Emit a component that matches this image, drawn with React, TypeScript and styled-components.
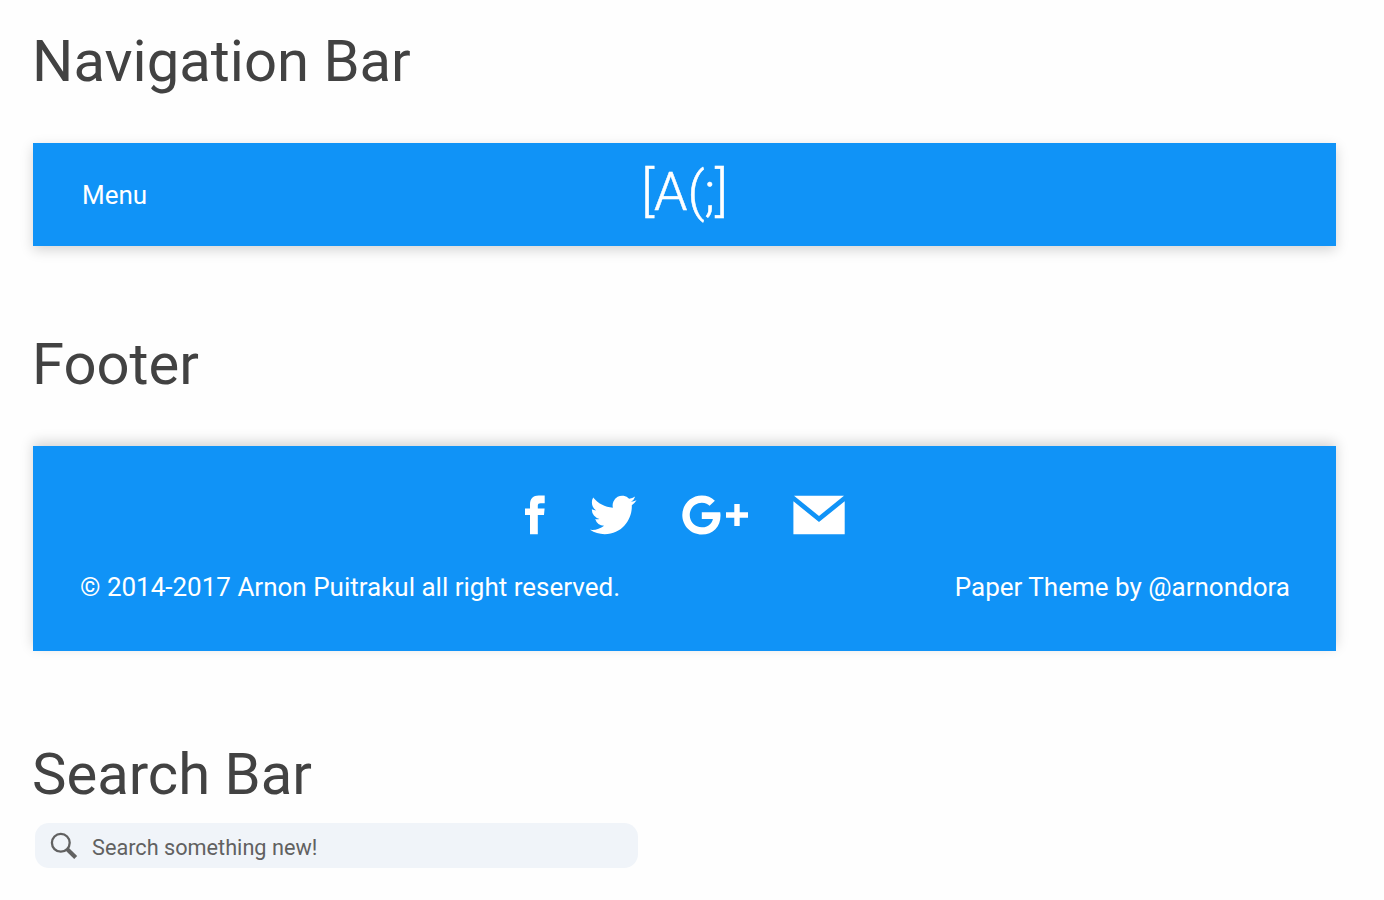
import React from 'react';
import styled, { createGlobalStyle } from 'styled-components';

const GlobalStyle = createGlobalStyle`
  * { box-sizing: border-box; }
  body {
    margin: 0;
    background: #fefefe;
    font-family: Roboto, "Liberation Sans", sans-serif;
  }
`;

const Page = styled.main`
  width: 1384px;
  height: 900px;
  padding: 27px 48px 0 33px;
  overflow: hidden;
`;

const Section = styled.section<{ $height: number }>`
  height: ${(p) => p.$height}px;
`;

const Heading = styled.h1<{ $gap: number }>`
  margin: 0 0 ${(p) => p.$gap}px -1px;
  color: #424242;
  font-size: 58px;
  font-weight: 400;
  line-height: 68px;
`;

const NavBar = styled.nav`
  display: grid;
  grid-template-columns: 1fr auto 1fr;
  align-items: center;
  height: 102.5px;
  padding: 0 49px;
  background: #1093f7;
  color: #fff;
  box-shadow: 0 4px 12px rgba(0, 0, 0, 0.17);
`;

const NavLink = styled.span`
  font-size: 26px;
  line-height: 30px;
`;

const Logo = styled.span`
  padding-bottom: 6px;
  font-size: 53.5px;
  font-weight: 300;
  line-height: 60px;
  -webkit-text-stroke: 0.5px #fff;
`;

const FooterBar = styled.footer`
  height: 205px;
  padding: 49px 46px 0 47px;
  background: #1093f7;
  color: #fff;
  box-shadow: 0 -4px 12px rgba(0, 0, 0, 0.17);
`;

const SocialRow = styled.div`
  display: flex;
  justify-content: center;
  align-items: flex-start;
  gap: 45px;
  height: 40px;
`;

const Icon = styled.svg`
  display: block;
  flex: none;
  fill: currentColor;
`;

const FooterText = styled.div`
  display: flex;
  justify-content: space-between;
  margin-top: 37px;
  font-size: 26px;
  line-height: 30px;
`;

const SearchBar = styled.label`
  display: flex;
  align-items: center;
  width: 603px;
  height: 45px;
  margin-left: 2px;
  padding-left: 15px;
  gap: 14px;
  border-radius: 14px;
  background: #f0f4f9;
  color: #616161;
`;

const SearchInput = styled.input`
  flex: 1;
  padding: 5px 0 0;
  border: 0;
  outline: 0;
  background: transparent;
  color: inherit;
  font: 400 21.7px/26px Roboto, "Liberation Sans", sans-serif;
  &::placeholder { color: #616161; opacity: 1; }
`;

const FacebookIcon = () => (
  <Icon width="20" height="40" viewBox="0 0 20 40">
    <path d="M5 39.3V20H0v-6.5h5V9.6C5 3.5 8.2.5 13.7.5h6v7.7h-4.1c-2 0-2.8.8-2.8 2.5v2.8h6.8L19 20h-6.2v19.3z" />
  </Icon>
);

const TwitterIcon = () => (
  <Icon width="47" height="40" viewBox="0 0 47 40">
    <path
      transform="translate(0 -3.7) scale(1.94 1.97)"
      d="M23.953 4.57a10 10 0 01-2.825.775 4.958 4.958 0 002.163-2.723c-.951.555-2.005.959-3.127 1.184a4.92 4.92 0 00-8.384 4.482C7.69 8.095 4.067 6.13 1.64 3.162a4.822 4.822 0 00-.666 2.475c0 1.71.87 3.213 2.188 4.096a4.904 4.904 0 01-2.228-.616v.06a4.923 4.923 0 003.946 4.827 4.996 4.996 0 01-2.212.085 4.936 4.936 0 004.604 3.417 9.867 9.867 0 01-6.102 2.105c-.39 0-.779-.023-1.17-.067a13.995 13.995 0 007.557 2.209c9.053 0 13.998-7.496 13.998-13.985 0-.21 0-.42-.015-.63A9.935 9.935 0 0024 4.59z"
    />
  </Icon>
);

const GooglePlusIcon = () => (
  <Icon width="66.5" height="40" viewBox="0 0 66.5 40">
    <path
      transform="translate(0.3 -10.6) scale(2.554)"
      d="M7.635 10.909v2.619h4.335c-.173 1.125-1.31 3.295-4.331 3.295-2.604 0-4.731-2.16-4.731-4.823 0-2.662 2.122-4.822 4.728-4.822 1.485 0 2.479.633 3.045 1.178l2.073-1.994c-1.33-1.245-3.056-1.995-5.115-1.995C3.412 4.365 0 7.785 0 12s3.414 7.635 7.635 7.635c4.41 0 7.332-3.098 7.332-7.461 0-.501-.054-.885-.12-1.265H7.635z"
    />
    <path d="M52.3 9h5.4v8.3h8.8v5.4h-8.8V31h-5.4v-8.3H44v-5.4h8.3z" />
  </Icon>
);

const MailIcon = () => (
  <Icon width="52" height="40" viewBox="0 0 52 40">
    <path d="M1 .7h50L26 21z" />
    <path d="M.4 6.3 26 27 51.7 6.3v33H.4z" />
  </Icon>
);

const SearchIcon = () => (
  <Icon width="28" height="28" viewBox="0 0 28 28">
    <circle cx="10.8" cy="10.8" r="8.9" fill="none" stroke="currentColor" strokeWidth="2.3" />
    <path d="M17 17 25.7 25.5" stroke="currentColor" strokeWidth="4.2" />
  </Icon>
);

export default function App() {
  return (
    <>
      <GlobalStyle />
      <Page>
        <Section $height={303}>
          <Heading $gap={48.4}>Navigation Bar</Heading>
          <NavBar>
            <NavLink>Menu</NavLink>
            <Logo>[A(;]</Logo>
          </NavBar>
        </Section>
        <Section $height={410}>
          <Heading $gap={48.4}>Footer</Heading>
          <FooterBar>
            <SocialRow>
              <FacebookIcon />
              <TwitterIcon />
              <GooglePlusIcon />
              <MailIcon />
            </SocialRow>
            <FooterText>
              <span>© 2014-2017 Arnon Puitrakul all right reserved.</span>
              <span>Paper Theme by @arnondora</span>
            </FooterText>
          </FooterBar>
        </Section>
        <Section $height={130}>
          <Heading $gap={15}>Search Bar</Heading>
          <SearchBar>
            <SearchIcon />
            <SearchInput placeholder="Search something new!" />
          </SearchBar>
        </Section>
      </Page>
    </>
  );
}
